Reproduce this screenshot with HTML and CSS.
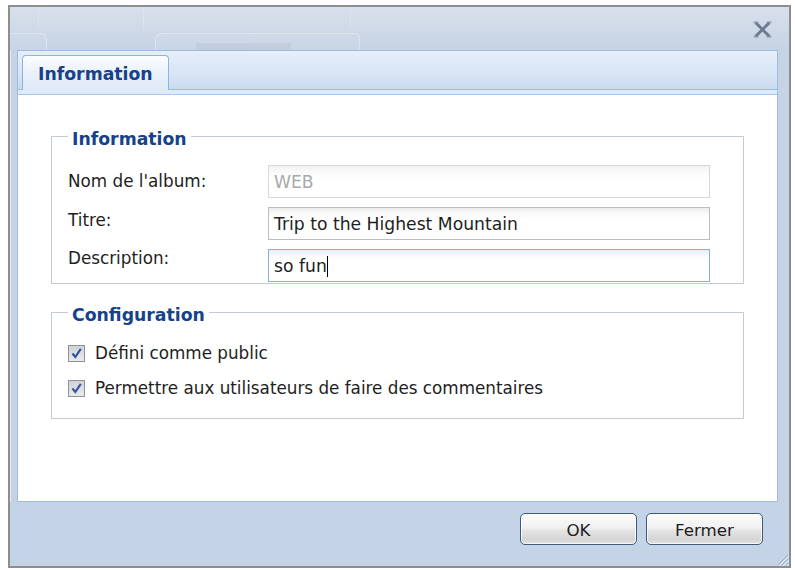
FILE: index.html
```html
<!DOCTYPE html>
<html lang="fr">
<head>
<meta charset="utf-8">
<title>Information</title>
<link rel="stylesheet" href="styles.css">
</head>
<body>
<div class="window">
  <div class="titlebar">
    <div class="ghost ghost-a"></div>
    <div class="ghost ghost-b"></div>
    <svg class="close" width="19" height="17" viewBox="0 0 19 17">
      <path d="M2.5 1.5 L16.5 15.5 M16.5 1.5 L2.5 15.5" stroke="#6b7a8f" stroke-width="3" fill="none"/>
      <path d="M0.5 1.2 H5.5 M13.5 1.2 H18.5 M0.5 15.8 H5.5 M13.5 15.8 H18.5" stroke="#8a97aa" stroke-width="1.2" fill="none"/>
    </svg>
  </div>
  <div class="panel">
    <div class="tabstrip">
      <div class="tab">Information</div>
    </div>
    <div class="tabband"></div>
    <div class="panel-body">
      <fieldset class="group">
        <legend>Information</legend>
        <div class="form">
          <div class="labels">
            <div class="label">Nom de l'album:</div>
            <div class="label">Titre:</div>
            <div class="label">Description:</div>
          </div>
          <div class="fields">
            <div class="field field-disabled">WEB</div>
            <div class="field">Trip to the Highest Mountain</div>
            <div class="field field-focus">so fun<span class="caret"></span></div>
          </div>
        </div>
      </fieldset>
      <fieldset class="group group-config">
        <legend>Configuration</legend>
        <div class="check-row">
          <span class="checkbox"><svg width="15" height="15" viewBox="0 0 15 15"><path d="M3.5 7.5 L6.3 11 L11.8 2.8" stroke="#2f52a0" stroke-width="2.1" fill="none"/></svg></span>
          <span>Défini comme public</span>
        </div>
        <div class="check-row">
          <span class="checkbox"><svg width="15" height="15" viewBox="0 0 15 15"><path d="M3.5 7.5 L6.3 11 L11.8 2.8" stroke="#2f52a0" stroke-width="2.1" fill="none"/></svg></span>
          <span>Permettre aux utilisateurs de faire des commentaires</span>
        </div>
      </fieldset>
    </div>
  </div>
  <div class="footer">
    <button class="btn">OK</button>
    <button class="btn">Fermer</button>
  </div>
  <svg class="grip" width="14" height="14" viewBox="0 0 14 14">
    <path d="M13 3 L3 13 M13 7 L7 13 M13 11 L11 13" stroke="#9aaac2" stroke-width="1" fill="none"/>
    <path d="M14 4 L4 14 M14 8 L8 14 M14 12 L12 14" stroke="#e6eef8" stroke-width="1" fill="none"/>
  </svg>
</div>
</body>
</html>
```
FILE: styles.css
```css
html, body {
  margin: 0;
  padding: 0;
  background: #ffffff;
}

body {
  font-family: "DejaVu Sans", Verdana, sans-serif;
  color: #1e1e1e;
}

.window {
  position: relative;
  box-sizing: border-box;
  width: 783px;
  height: 563px;
  margin: 5px 0 0 8px;
  border: 2px solid #8e8e8e;
  background: #c5d3e5;
  box-shadow: inset 1px 1px 0 rgba(255, 255, 255, 0.55);
  display: flex;
  flex-direction: column;
}

.titlebar {
  height: 43px;
  flex: none;
  display: flex;
  align-items: flex-end;
  background:
    linear-gradient(to right, transparent 28px, rgba(255,255,255,0.2) 28px, rgba(255,255,255,0.2) 29px, transparent 29px) 0 0 / 100% 22px no-repeat,
    linear-gradient(to right, transparent 133px, rgba(255,255,255,0.2) 133px, rgba(255,255,255,0.2) 134px, transparent 134px) 0 0 / 100% 22px no-repeat,
    linear-gradient(to right, transparent 340px, rgba(255,255,255,0.2) 340px, rgba(255,255,255,0.2) 341px, transparent 341px) 0 0 / 100% 22px no-repeat,
    linear-gradient(#d8e0eb, #c6d3e4);
}

.ghost {
  height: 17px;
  box-sizing: border-box;
  border: 1px solid rgba(255, 255, 255, 0.3);
  border-bottom: none;
  border-radius: 6px 6px 0 0;
  background: rgba(255, 255, 255, 0.05);
}

.ghost-a {
  width: 37px;
  border-left: none;
  border-top-left-radius: 0;
}

.ghost-b {
  width: 205px;
  margin-left: 108px;
  background:
    linear-gradient(to right, transparent 40px, rgba(150,160,180,0.16) 40px, rgba(150,160,180,0.16) 135px, transparent 135px) 0 9px / 100% 8px no-repeat,
    rgba(255, 255, 255, 0.05);
}

.close {
  display: block;
  align-self: flex-start;
  margin: 14px 17px 0 auto;
}

.panel {
  box-sizing: border-box;
  height: 452px;
  margin: 0 11px 0 7px;
  border: 1px solid #9ebbe2;
  background: #ffffff;
  display: flex;
  flex-direction: column;
}

.tabstrip {
  height: 39px;
  flex: none;
  box-sizing: border-box;
  padding: 5px 0 0 4px;
  display: flex;
  align-items: flex-end;
  background: linear-gradient(#e6eefa, #d8e5f5 60%, #cadaef);
  border-bottom: 1px solid #99bbe8;
}

.tab {
  box-sizing: border-box;
  width: 147px;
  height: 35px;
  margin-bottom: -1px;
  padding: 0 0 0 15px;
  border: 1px solid #8db2e3;
  border-bottom: none;
  border-radius: 4px 4px 0 0;
  background: linear-gradient(#fbfdff, #eaf1fb 50%, #dfe9f7);
  color: #15428b;
  font-weight: bold;
  font-size: 17.3px;
  line-height: 36px;
}

.tabband {
  height: 4px;
  flex: none;
  background: #deebfb;
  border-bottom: 1px solid #a9c4e8;
}

.panel-body {
  flex: 1;
  padding: 28px 33px 0 33px;
}

.group {
  margin: 0;
  min-width: 0;
  border: 1px solid #c3cad6;
  padding: 13px 33px 1px 16px;
}

.group legend {
  padding: 6px 4px 0 4px;
  color: #15428b;
  font-weight: bold;
  font-size: 17.3px;
  line-height: 20px;
}

.form {
  display: flex;
}

.labels {
  width: 200px;
  flex: none;
  font-size: 16.8px;
  line-height: 38.5px;
}

.fields {
  flex: 1;
  margin-top: 3px;
  display: flex;
  flex-direction: column;
  gap: 9px;
}

.field {
  box-sizing: border-box;
  height: 33px;
  padding: 2px 5px 0 5px;
  border: 1px solid #b9bcc9;
  background: linear-gradient(#ececec, #fbfbfb 6px, #ffffff 12px);
  font-size: 17.2px;
  line-height: 29px;
  color: #1e1e1e;
  white-space: nowrap;
}

.field-disabled {
  border-color: #d6d8de;
  background: linear-gradient(#f1f1f1, #fcfcfc 8px, #ffffff 14px);
  color: #a9a9a9;
}

.field-focus {
  border-color: #86aede;
}

.caret {
  display: inline-block;
  width: 1px;
  height: 21px;
  background: #000000;
  vertical-align: -5px;
}

.group-config {
  margin-top: 15px;
  padding: 18px 33px 20px 16px;
}

.check-row {
  display: flex;
  align-items: center;
  height: 20px;
  font-size: 16.8px;
  line-height: 20px;
}

.check-row + .check-row {
  margin-top: 15px;
}

.checkbox {
  box-sizing: border-box;
  width: 17px;
  height: 17px;
  margin-right: 10px;
  flex: none;
  border: 1px solid #8f9297;
  background: linear-gradient(#d0d2d6, #e8eaee);
  display: flex;
  align-items: center;
  justify-content: center;
}

.checkbox svg {
  display: block;
}

.footer {
  flex: 1;
  display: flex;
  justify-content: flex-end;
  align-items: flex-start;
  gap: 9px;
  padding: 11px 26px 0 0;
  background: #c4d3e6;
}

.btn {
  box-sizing: border-box;
  width: 117px;
  height: 32px;
  margin: 0;
  padding: 2px 0 0 0;
  border: 1px solid #3f5a7c;
  border-radius: 5px;
  background: linear-gradient(#fbfbfb 0%, #f1f1f1 45%, #e4e4e4 55%, #d5d5d5 85%, #e2e2e2 100%);
  box-shadow: inset 0 0 0 1px rgba(255, 255, 255, 0.75);
  font-family: "DejaVu Sans", Verdana, sans-serif;
  font-size: 16.7px;
  line-height: 28px;
  color: #1e1e1e;
}

.grip {
  position: absolute;
  right: 0;
  bottom: 0;
  display: block;
}
```
